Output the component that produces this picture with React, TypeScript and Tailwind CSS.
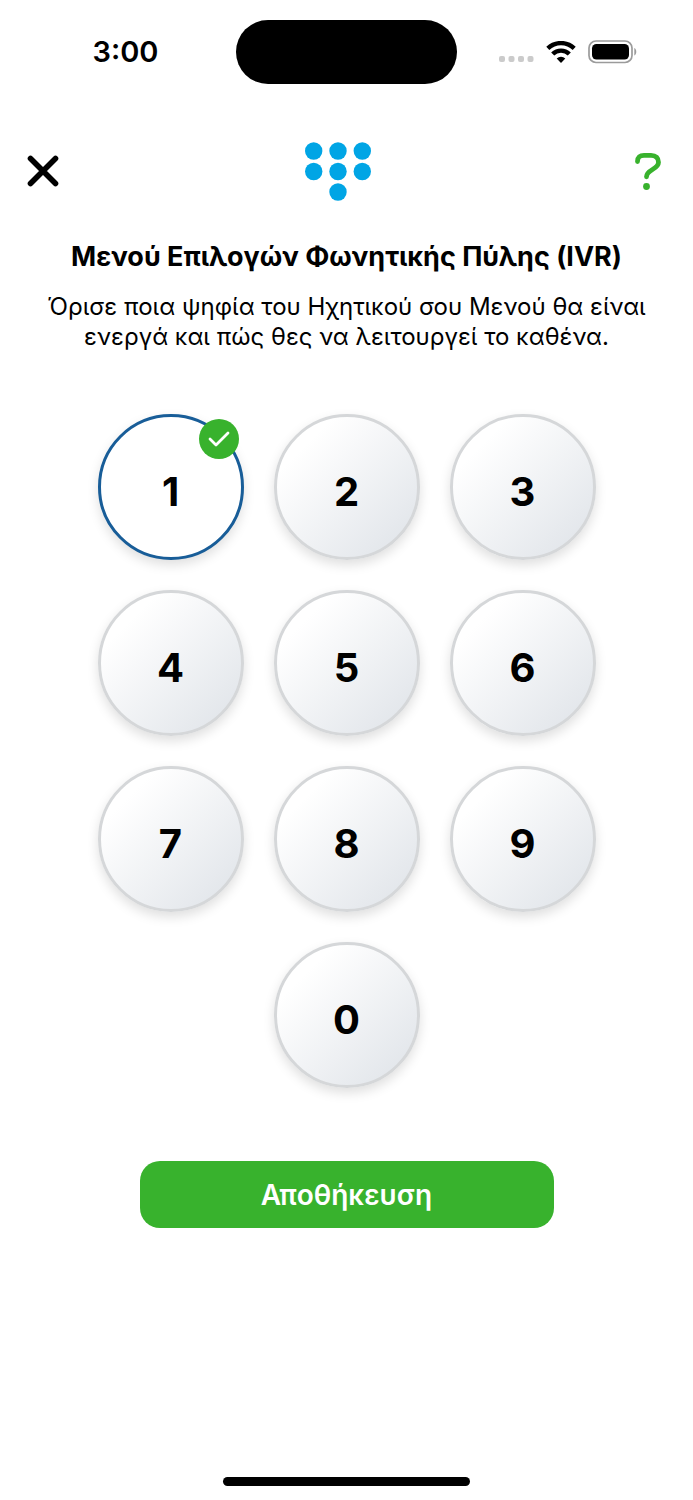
import React, { useState } from "react";
import clsx from "clsx";

const DIGITS = ["1", "2", "3", "4", "5", "6", "7", "8", "9", "0"];

function StatusBar() {
  return (
    <div className="grid grid-cols-3 h-[104px] pt-5 items-start">
      <div className="h-16 pl-5 flex items-center justify-center text-[29px] leading-9 font-semibold">
        <span>3:00</span>
      </div>
      <div className="h-16 w-[221px] rounded-full bg-black justify-self-center" />
      <div className="h-16 pr-5 flex items-center justify-center gap-3">
        <svg width="36" height="24" viewBox="0 0 36 24" fill="#cbcbcb" aria-hidden="true">
          <rect x="1" y="16" width="6" height="6" rx="2" />
          <rect x="10.5" y="16" width="6" height="6" rx="2" />
          <rect x="20" y="16" width="6" height="6" rx="2" />
          <rect x="29.5" y="16" width="6" height="6" rx="2" />
        </svg>
        <svg width="30" height="22" viewBox="0 0 30 22" aria-hidden="true">
          <g fill="none" stroke="#000" strokeWidth="4.4">
            <path d="M1.8 7.400a19 19 0 0 1 26.400 0" />
            <path d="M6.700 13a11.800 11.800 0 0 1 16.600 0" />
          </g>
          <path d="M15 22l-4.300-4.400a6.100 6.100 0 0 1 8.600 0z" />
        </svg>
        <svg width="50" height="24" viewBox="0 0 50 24" aria-hidden="true">
          <rect x="1" y="1" width="43" height="21.5" rx="7" fill="none" stroke="#9b9b9b" strokeWidth="1.7" />
          <rect x="4" y="4" width="37" height="15.5" rx="4.5" />
          <path d="M46.3 8c2.6 1 2.6 6.500 0 7.500z" fill="#9b9b9b" />
        </svg>
      </div>
    </div>
  );
}

function KeypadLogo() {
  return (
    <svg width="68" height="60" viewBox="0 0 68 60" fill="#00a5e5" aria-hidden="true">
      {[9.700, 34, 58.300].map(x => (
        <g key={x}>
          <circle cx={x} cy="10" r="8.700" />
          <circle cx={x} cy="30.500" r="8.700" />
        </g>
      ))}
      <circle cx="34" cy="51" r="8.700" />
    </svg>
  );
}

interface DigitKeyProps {
  digit: string;
  active: boolean;
  onToggle: () => void;
}

function DigitKey({ digit, active, onToggle }: DigitKeyProps) {
  return (
    <button
      type="button"
      onClick={onToggle}
      aria-pressed={active}
      className={clsx(
        "relative aspect-square rounded-full border-3 flex items-center justify-center pt-2.5 text-[40px] leading-12 font-bold shadow-[0_5px_12px_rgba(0,0,0,0.13)]",
        active ? "border-[#185d98] bg-white" : "border-[#d5d7d9] bg-linear-135 from-white from-20% to-[#e0e4e9] to-95%",
        digit === "0" && "col-start-2"
      )}
    >
      {digit}
      {active && (
        <span className="absolute top-[2px] right-[2px] size-10 rounded-full bg-[#38b22d] flex items-center justify-center">
          <svg width="22" height="16" viewBox="0 0 22 16" fill="none" stroke="#fff" strokeWidth="2.800" strokeLinecap="round" strokeLinejoin="round" aria-hidden="true">
            <path d="M2 8l6 6L20 2" />
          </svg>
        </span>
      )}
    </button>
  );
}

export default function App() {
  const [active, setActive] = useState<string[]>(["1"]);

  const toggle = (digit: string) => {
    setActive(active.includes(digit) ? active.filter(d => d !== digit) : [...active, digit]);
  };

  return (
    <div className="min-h-screen flex flex-col bg-white text-black font-['Inter',sans-serif]">
      <StatusBar />

      <header className="h-[134px] pl-6 pr-8 flex items-center justify-between">
        <button type="button" aria-label="Κλείσιμο">
          <svg width="38" height="38" viewBox="0 0 38 38" stroke="#000" strokeWidth="5.600" strokeLinecap="round" aria-hidden="true">
            <path d="M6.500 6.500l25 25M31.500 6.500l-25 25" />
          </svg>
        </button>
        <KeypadLogo />
        <button type="button" aria-label="Βοήθεια" className="w-12 flex justify-end">
          <svg width="28" height="42" viewBox="0 0 28 42" fill="none" stroke="#38b22d" strokeWidth="4.800" strokeLinecap="round" aria-hidden="true">
            <path d="M4.500 11.500C4.500 7 7 5.300 11 5.300h7c5 0 7.500 3 7.500 7 0 7.500-12 7-12 14.500" />
            <circle cx="13.500" cy="36.500" r="3.400" fill="#38b22d" stroke="none" />
          </svg>
        </button>
      </header>

      <main className="px-8 flex flex-col items-center text-center">
        <h1 className="text-[27px] leading-[38px] font-bold">Μενού Επιλογών Φωνητικής Πύλης (IVR)</h1>
        <p className="mt-4 text-2xl leading-[30px]">
          Όρισε ποια ψηφία του Ηχητικού σου Μενού θα είναι ενεργά και πώς θες να λειτουργεί το καθένα.
        </p>

        <div className="mt-[62px] w-full max-w-[498px] grid grid-cols-3 gap-[30px]">
          {DIGITS.map(digit => (
            <DigitKey
              key={digit}
              digit={digit}
              active={active.includes(digit)}
              onToggle={() => toggle(digit)}
            />
          ))}
        </div>

        <button
          type="button"
          className="mt-[73px] w-full max-w-[414px] h-[67px] rounded-[20px] bg-[#38b22d] text-white text-[28px] leading-9 font-semibold"
        >
          Αποθήκευση
        </button>
      </main>

      <div className="mt-auto mb-[14px] self-center w-[247px] h-[9px] rounded-full bg-black" />
    </div>
  );
}
